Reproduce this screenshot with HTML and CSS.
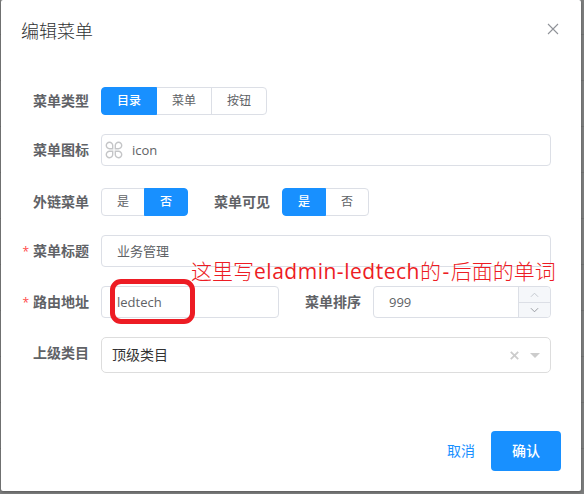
FILE: index.html
```html
<!DOCTYPE html>
<html lang="zh-CN">
<head>
<meta charset="utf-8">
<title>编辑菜单</title>
<link rel="stylesheet" href="styles.css">
</head>
<body>
<main class="dialog">
  <header class="header">
    <h1 class="title">编辑菜单</h1>
    <svg class="close" viewBox="0 0 12 12"><path d="M1 1l10 10M11 1L1 11"/></svg>
  </header>
  <form class="form">
    <div class="row row-type">
      <span class="label">菜单类型</span>
      <div class="group"><span class="opt wide on">目录</span><span class="opt wide">菜单</span><span class="opt wide">按钮</span></div>
    </div>
    <div class="row row-icon">
      <span class="label">菜单图标</span>
      <div class="input with-icon">
        <svg class="cmd" viewBox="0 0 18 18"><path d="M7.7 7.7H4.6A3.2 3.2 0 1 1 7.7 4.5zM10.3 7.7V4.5A3.2 3.2 0 1 1 13.4 7.7zM7.7 10.3V13.5A3.2 3.2 0 1 1 4.6 10.3zM10.3 10.3H13.4A3.2 3.2 0 1 1 10.3 13.5z"/></svg>
        <span>icon</span>
      </div>
    </div>
    <div class="row row-flags">
      <span class="label">外链菜单</span>
      <div class="group"><span class="opt">是</span><span class="opt on">否</span></div>
      <span class="label label-second">菜单可见</span>
      <div class="group"><span class="opt on">是</span><span class="opt">否</span></div>
    </div>
    <div class="row row-title">
      <span class="label required">菜单标题</span>
      <div class="input">业务管理</div>
    </div>
    <div class="row row-route">
      <span class="label required">路由地址</span>
      <div class="input route">ledtech</div>
      <span class="label label-second">菜单排序</span>
      <div class="input number">
        <span>999</span>
        <div class="steps">
          <span class="step"><svg class="chev dim" viewBox="0 0 10 6"><path d="M1 5l4-4 4 4"/></svg></span>
          <span class="step"><svg class="chev" viewBox="0 0 10 6"><path d="M1 1l4 4 4-4"/></svg></span>
        </div>
      </div>
    </div>
    <div class="row row-parent">
      <span class="label">上级类目</span>
      <div class="input select">
        <span class="value">顶级类目</span>
        <svg class="clear" viewBox="0 0 8 8"><path d="M.7.7l6.6 6.6M7.3.7L.7 7.3"/></svg>
        <svg class="arrow" viewBox="0 0 10 5"><path d="M0 0h10L5 5z"/></svg>
      </div>
    </div>
  </form>
  <footer class="footer">
    <span class="cancel">取消</span>
    <span class="confirm">确认</span>
  </footer>
</main>
<div class="mark"></div>
<div class="note">这里写<span class="note-latin">eladmin-ledtech</span>的<span class="note-dash">-</span>后面的单词</div>
</body>
</html>
```
FILE: styles.css
```css
* { box-sizing: border-box; }
body {
  margin: 0;
  width: 584px;
  height: 494px;
  overflow: hidden;
  position: relative;
  padding: 0 3px 3px 1px;
  font: 13px/20px "Open Sans", "Noto Sans CJK SC", sans-serif;
  color: #606266;
  background: repeating-linear-gradient(to bottom, #7d7e7e 0 45px, #727373 45px 46px) 0 -11px / 100% 552px;
}
.dialog {
  height: 491px;
  background: #fff;
  border-radius: 2px;
  box-shadow: 0 1px 3px rgba(0, 0, 0, .3);
}
.header {
  display: flex;
  justify-content: space-between;
  padding: 19px 22px 0 20px;
  height: 87px;
}
.title {
  margin: 0;
  font-size: 18px;
  line-height: 24px;
  font-weight: 300;
  color: #303133;
}
.close {
  width: 12px;
  height: 12px;
  margin-top: 4px;
  fill: none;
  stroke: #909399;
  stroke-width: 1.1;
}
.form { padding: 0 30px 0 20px; }
.row { display: flex; }
.row-type { height: 47px; }
.row-icon { height: 54px; }
.row-flags { height: 47px; }
.row-title, .row-route { height: 51px; }
.row-parent { height: 94px; }
.label {
  width: 80px;
  padding-right: 12px;
  text-align: right;
  font-size: 14px;
  line-height: 27px;
  font-weight: 700;
  white-space: nowrap;
}
.row-icon .label, .row-title .label, .row-route .label, .row-parent .label { line-height: 32px; }
.label-second { width: 94px; }
.required::before {
  content: "*";
  margin-right: 4px;
  color: #ff4949;
  font-size: 12px;
  font-weight: 400;
}
.group { display: flex; height: 28px; }
.opt {
  width: 44px;
  border: 1px solid #dcdfe6;
  text-align: center;
  font-size: 12px;
  line-height: 26px;
}
.opt + .opt { margin-left: -1px; }
.opt.wide { width: 56px; }
.opt:first-child { border-radius: 4px 0 0 4px; }
.opt:last-child { border-radius: 0 4px 4px 0; }
.opt.on {
  position: relative;
  color: #fff;
  font-weight: 500;
  background: #1890ff;
  border-color: #1890ff;
}
.input {
  flex: 1;
  height: 32px;
  border: 1px solid #dcdfe6;
  border-radius: 4px;
  padding-left: 15px;
  line-height: 30px;
  display: flex;
}
.with-icon { padding-left: 3px; align-items: center; gap: 9px; }
.cmd {
  width: 18px;
  height: 18px;
  fill: none;
  stroke: #c4c5c7;
  stroke-width: 1.4;
}
.route { flex: 0 0 178px; }
.number { justify-content: space-between; }
.steps {
  width: 32px;
  border-left: 1px solid #dcdfe6;
  background: #f5f7fa;
  border-radius: 0 4px 4px 0;
}
.step {
  height: 15px;
  display: flex;
  align-items: center;
  justify-content: center;
}
.step + .step { border-top: 1px solid #dcdfe6; }
.chev {
  width: 9px;
  height: 6px;
  fill: none;
  stroke: #909399;
}
.chev.dim { stroke: #c0c4cc; }
.select {
  height: 36px;
  padding: 0 10px;
  border-color: #ddd;
  border-radius: 5px;
  align-items: center;
  color: #333;
  font-size: 14px;
}
.value { flex: 1; }
.clear {
  width: 9px;
  height: 9px;
  margin-right: 11px;
  fill: none;
  stroke: #ccc;
  stroke-width: 1.6;
}
.arrow { width: 10px; height: 5px; fill: #ccc; }
.footer {
  display: flex;
  justify-content: flex-end;
  padding-right: 20px;
  line-height: 40px;
  font-size: 14px;
}
.cancel { margin-right: 16px; color: #1890ff; }
.confirm {
  width: 70px;
  height: 40px;
  border-radius: 4px;
  text-align: center;
  color: #fff;
  font-weight: 500;
  background: #1890ff;
}
.mark {
  position: absolute;
  left: 110px;
  top: 279px;
  width: 85px;
  height: 45px;
  border: 5px solid #ed1c24;
  border-radius: 11px;
}
.note {
  position: absolute;
  left: 191px;
  top: 256px;
  font-size: 21px;
  line-height: 30px;
  font-weight: 300;
  color: #ed1c24;
  white-space: nowrap;
}
.note-latin { font-weight: 400; letter-spacing: .52px; }
.note-dash { font-weight: 400; margin: 0 1.5px; }
```
